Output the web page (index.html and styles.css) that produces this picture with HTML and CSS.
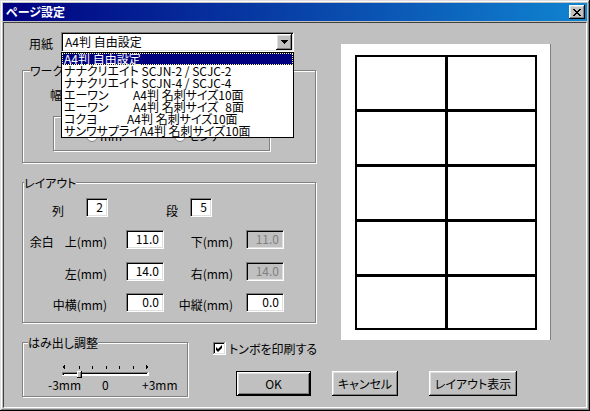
FILE: index.html
```html
<!DOCTYPE html>
<html lang="ja">
<head>
<meta charset="utf-8">
<title>ページ設定</title>
<link rel="stylesheet" href="styles.css">
</head>
<body>
<div class="window">
  <div class="titlebar">
    <span class="title">ページ設定</span>
    <span class="close raised">
      <svg width="8" height="7" viewBox="0 0 8 7"><path d="M0 0h2v1h-2zM6 0h2v1h-2zM1 1h2v1h-2zM5 1h2v1h-2zM2 2h4v1h-4zM3 3h2v1h-2zM2 4h4v1h-4zM1 5h2v1h-2zM5 5h2v1h-2zM0 6h2v1h-2zM6 6h2v1h-2z" fill="#000"/></svg>
    </span>
  </div>
  <div class="client">
    <div class="upper">
      <div class="leftcol">
        <div class="paper-row">
          <span class="paper-label">用紙</span>
          <div class="combo">
            <span class="combo-text">A4判 自由設定</span>
            <span class="combo-btn raised">
              <svg width="7" height="4" viewBox="0 0 7 4"><path d="M0 0h7v1h-1v1h-1v1h-1v1h-1v-1h-1v-1h-1v-1h-1z" fill="#000"/></svg>
            </span>
            <ul class="combo-list">
              <li class="sel">A4判 自由設定</li>
              <li>ナナクリエイト SCJN-2 / SCJC-2</li>
              <li>ナナクリエイト SCJN-4 / SCJC-4</li>
              <li><span class="pre w69">エーワン</span>A4判 名刺サイズ10面</li>
              <li><span class="pre w69">エーワン</span>A4判 名刺サイズ<span class="gap8">8面</span></li>
              <li><span class="pre w63">コクヨ</span>A4判 名刺サイズ10面</li>
              <li>サンワサプライA4判 名刺サイズ10面</li>
            </ul>
          </div>
        </div>

        <div class="etched work">
          <div class="gtitle">ワーク</div>
          <div class="width-label">幅</div>
          <div class="etched inner-box">
            <div class="radios">
              <span class="radio-item"><svg width="12" height="12" viewBox="0 0 12 12"><circle cx="6" cy="6" r="5.5" fill="#fff" stroke="#808080"/></svg>mm</span>
              <span class="radio-item"><svg width="12" height="12" viewBox="0 0 12 12"><circle cx="6" cy="6" r="5.5" fill="#fff" stroke="#808080"/></svg>センチ</span>
            </div>
          </div>
        </div>

        <div class="etched layout">
          <div class="gtitle">レイアウト</div>
          <div class="row-a">
            <span class="lbl-retsu">列</span>
            <span class="field f-small f-a1">2</span>
            <span class="lbl-dan">段</span>
            <span class="field f-small f-a2">5</span>
          </div>
          <div class="grid">
            <span class="lbl">余白<span class="sp"></span>上(mm)</span>
            <span class="field">11.0</span>
            <span class="lbl c2">下(mm)</span>
            <span class="field disabled">11.0</span>

            <span class="lbl">左(mm)</span>
            <span class="field">14.0</span>
            <span class="lbl c2">右(mm)</span>
            <span class="field disabled">14.0</span>

            <span class="lbl">中横(mm)</span>
            <span class="field">0.0</span>
            <span class="lbl c2">中縦(mm)</span>
            <span class="field">0.0</span>
          </div>
        </div>
      </div>

      <div class="preview">
        <svg width="209" height="296" viewBox="0 0 209 296">
          <rect x="15" y="12" width="180" height="273" fill="none" stroke="#000" stroke-width="2"/>
          <rect x="104" y="12" width="3" height="273" fill="#000"/>
          <rect x="15" y="65" width="180" height="3" fill="#000"/>
          <rect x="15" y="120" width="180" height="3" fill="#000"/>
          <rect x="15" y="175" width="180" height="3" fill="#000"/>
          <rect x="15" y="230" width="180" height="3" fill="#000"/>
        </svg>
      </div>
    </div>

    <div class="lower">
      <div class="etched hami">
        <div class="gtitle">はみ出し調整</div>
        <svg class="slider" width="90" height="16" viewBox="0 0 90 16">
          <path d="M3 4h1v-1h1v4h-1v-1h-1z" fill="#000"/>
          <rect x="19" y="4" width="1" height="3" fill="#000"/>
          <rect x="32" y="4" width="1" height="3" fill="#000"/>
          <rect x="46" y="4" width="1" height="3" fill="#000"/>
          <rect x="59" y="4" width="1" height="3" fill="#000"/>
          <rect x="73" y="4" width="1" height="3" fill="#000"/>
          <path d="M86 3h1v1h1v2h-1v1h-1z" fill="#000"/>
          <rect x="2" y="10" width="87" height="4" fill="#fff"/>
          <rect x="2" y="10" width="86" height="1" fill="#808080"/>
          <rect x="2" y="10" width="1" height="3" fill="#808080"/>
          <rect x="3" y="11" width="84" height="1" fill="#000"/>
          <rect x="3" y="11" width="1" height="2" fill="#000"/>
          <rect x="17" y="9" width="5" height="7" fill="#c0c0c0"/>
          <rect x="17" y="9" width="5" height="1" fill="#fff"/>
          <rect x="17" y="9" width="1" height="7" fill="#fff"/>
          <rect x="21" y="9" width="1" height="7" fill="#000"/>
          <rect x="17" y="15" width="5" height="1" fill="#000"/>
          <rect x="20" y="10" width="1" height="5" fill="#808080"/>
        </svg>
        <div class="scale">
          <span class="s1">-3mm</span>
          <span class="s2">0</span>
          <span>+3mm</span>
        </div>
      </div>

      <div class="actions">
        <div class="check">
          <svg width="13" height="13" viewBox="0 0 13 13">
            <rect width="13" height="13" fill="#fff"/>
            <rect width="12" height="12" fill="#808080"/>
            <rect x="1" y="1" width="11" height="11" fill="#dfdfdf"/>
            <rect x="1" y="1" width="10" height="10" fill="#000"/>
            <rect x="2" y="2" width="9" height="9" fill="#fff"/>
            <polygon points="3,5 5,7 9,3 9,6 5,10 3,8" fill="#000"/>
          </svg>
          <span>トンボを印刷する</span>
        </div>
        <div class="buttons">
          <button class="btn default ok">OK</button>
          <button class="btn raised cancel">キャンセル</button>
          <button class="btn raised lay">レイアウト表示</button>
        </div>
      </div>
    </div>
  </div>
</div>
</body>
</html>
```

FILE: styles.css
```css
* { box-sizing: border-box; }
html, body { margin: 0; }
body {
  font-family: "Noto Sans CJK JP", "Noto Sans", sans-serif;
  font-size: 12px;
  line-height: 12px;
  font-feature-settings: "palt";
  color: #000;
  background: #c0c0c0;
}

.window {
  width: 590px;
  height: 411px;
  padding: 3px;
  background: #c0c0c0;
  box-shadow: inset -1px -1px #000, inset 1px 1px #dfdfdf, inset -2px -2px #808080, inset 2px 2px #fff;
  display: flex;
  flex-direction: column;
}

.raised {
  background: #c0c0c0;
  box-shadow: inset -1px -1px #000, inset 1px 1px #fff, inset -2px -2px #808080, inset 2px 2px #dfdfdf;
}

.titlebar {
  flex: none;
  height: 18px;
  display: flex;
  align-items: center;
  justify-content: space-between;
  padding: 0 2px 0 3px;
  background: linear-gradient(to right, #000080, #1084d0);
  color: #fff;
  font-weight: bold;
}
.close {
  width: 16px;
  height: 14px;
  display: flex;
  align-items: center;
  justify-content: center;
}
.close svg { display: block; }

.client {
  flex: 1;
  margin-top: 1px;
  border: 1px solid;
  border-color: #404040 #fff #fff #404040;
  padding: 9px 0 0 18px;
}

.upper { display: flex; }
.leftcol { width: 294px; flex: none; }

.paper-row { display: flex; height: 20px; }
.paper-label { width: 32px; margin: 6px 0 0 7px; }

.combo {
  position: relative;
  width: 233px;
  height: 20px;
  display: flex;
  align-items: center;
  justify-content: space-between;
  background: #fff;
  border: 1px solid;
  border-color: #808080 #fff #fff #808080;
  box-shadow: inset 1px 1px #000, inset -1px -1px #dfdfdf;
}
.combo-text { padding-left: 3px; white-space: nowrap; }
.combo-btn {
  width: 16px;
  height: 16px;
  margin-right: 1px;
  display: flex;
  align-items: center;
  justify-content: center;
}
.combo-btn svg { display: block; }

.combo-list {
  position: absolute;
  top: 19px;
  left: -1px;
  width: 233px;
  height: 86px;
  margin: 0;
  padding: 0;
  list-style: none;
  background: #fff;
  border: 1px solid #000;
  z-index: 2;
}
.combo-list li {
  height: 12px;
  line-height: 12px;
  padding-left: 2px;
  white-space: nowrap;
}
.combo-list li.sel {
  background: #000080;
  color: #fff;
  outline: 1px dotted #ffff80;
  outline-offset: -1px;
}
.pre { display: inline-block; }
.w69 { width: 69px; }
.w63 { width: 63px; }
.gap8 { margin-left: 7px; }

.etched {
  border: 1px solid #808080;
  box-shadow: inset 1px 1px #fff, 1px 1px #fff;
}
.gtitle {
  width: max-content;
  height: 12px;
  margin-top: -6px;
  background: #c0c0c0;
  white-space: nowrap;
}

.work { margin-top: 18px; height: 93px; }
.work .gtitle { margin-left: 7px; }
.width-label { width: max-content; margin: 12px 0 0 27px; }
.inner-box { margin: 15px 0 0 30px; width: 217px; height: 35px; }
.radios { display: flex; margin: 13px 0 0 32px; }
.radio-item { display: flex; align-items: center; gap: 2px; width: 88px; }
.radio-item svg { display: block; }

.layout { margin-top: 19px; height: 141px; }
.layout .gtitle { margin-left: 1px; }

.field {
  display: block;
  height: 19px;
  width: 38px;
  background: #fff;
  border: 1px solid;
  border-color: #808080 #fff #fff #808080;
  box-shadow: inset 1px 1px #000, inset -1px -1px #dfdfdf;
  text-align: right;
  padding-right: 4px;
  line-height: 15px;
}
.field.disabled { background: #c0c0c0; color: #808080; }
.f-small { width: 22px; }

.row-a { display: flex; align-items: flex-start; margin-top: 9px; }
.lbl-retsu { margin: 7px 0 0 29px; }
.f-a1 { margin-left: 22px; }
.lbl-dan { margin: 7px 0 0 58px; }
.f-a2 { margin-left: 12px; }

.grid {
  display: grid;
  grid-template-columns: 103px 38px 82px 38px;
  grid-template-rows: 32px 31px 19px;
  margin-top: 13px;
}
.grid .field { align-self: start; }
.grid .lbl {
  justify-self: end;
  align-self: start;
  margin-top: 6px;
  padding-right: 19px;
  white-space: nowrap;
}
.grid .lbl.c2 { padding-right: 13px; }
.sp { display: inline-block; width: 11px; }

.preview {
  flex: none;
  margin: 12px 0 -4px 25px;
  width: 209px;
  height: 296px;
  background: #fff;
  box-shadow: 1px 0 #808080;
}
.preview svg { display: block; }

.lower { display: flex; align-items: flex-start; }
.hami { margin-top: 6px; width: 166px; height: 55px; flex: none; }
.hami .gtitle { margin-left: 5px; }
.slider { display: block; margin: 13px 0 0 37px; }
.scale { display: flex; margin: 1px 0 0 25px; }
.s1 { width: 54px; }
.s2 { width: 40px; }

.actions { margin-left: 25px; padding-top: 6px; }
.check { display: flex; align-items: center; gap: 3px; height: 13px; }
.check svg { display: block; }
.buttons { display: flex; margin: 16px 0 0 23px; }
.btn {
  height: 25px;
  padding: 0;
  font: inherit;
  color: #000;
  border: none;
  display: flex;
  align-items: center;
  justify-content: center;
}
.btn.default {
  background: #c0c0c0;
  border: 1px solid #000;
  box-shadow: inset 1px 1px #fff, inset -1px -1px #000, inset 2px 2px #dfdfdf, inset -2px -2px #808080;
}
.ok { width: 75px; }
.cancel { width: 66px; margin-left: 21px; }
.lay { width: 88px; margin-left: 31px; }
```
